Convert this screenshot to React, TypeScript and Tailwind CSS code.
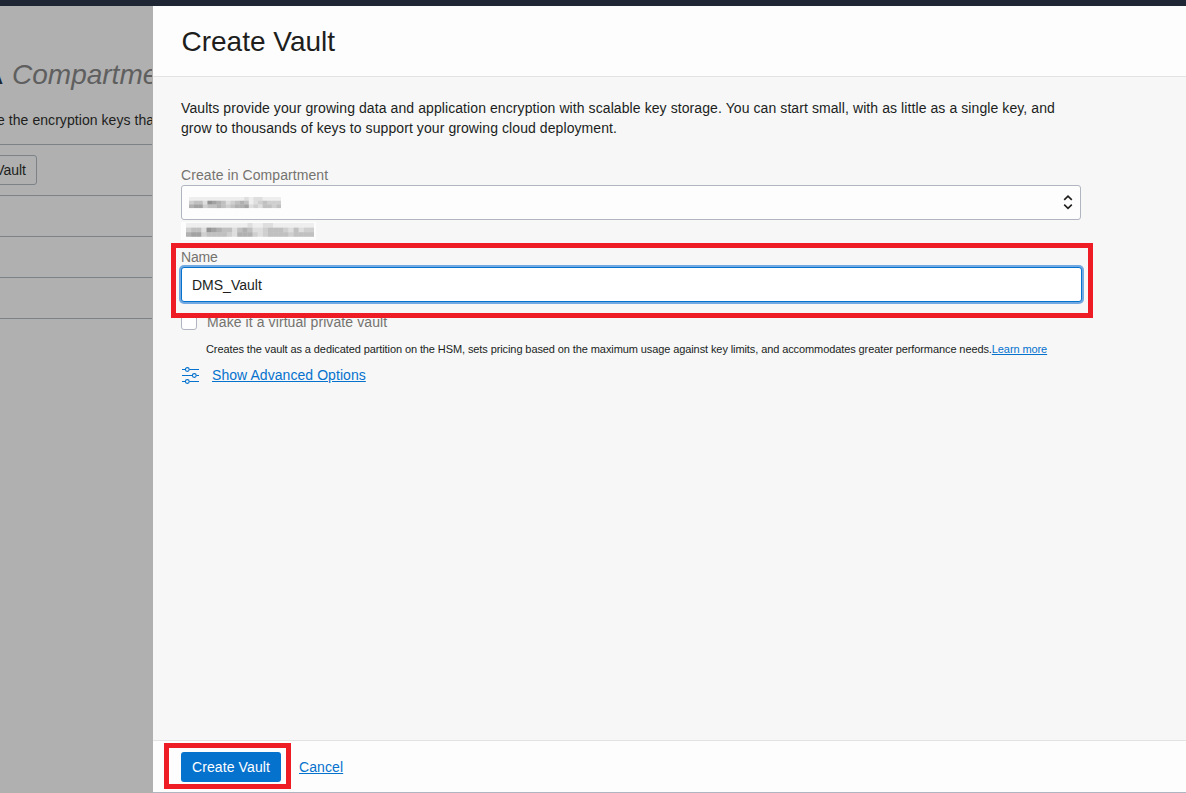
import React from "react";

const fieldRows = [
  "11111111111121221111",
  "34427654234541234333",
  "56634454345562324434",
];

const hintRows = [
  "1111111111112112211111111",
  "3442765442454223444324233",
  "5663444432555323444434444",
];

type MosaicProps = { rows: string[]; className: string; cell: number; rowHeight: number; left: number; top: number };

function Mosaic({ rows, className, cell, rowHeight, left, top }: MosaicProps) {
  return (
    <svg className={className} aria-hidden="true">
      {rows.flatMap((row, y) =>
        row.split("").map((v, x) => (
          <rect key={`${x}-${y}`} x={left + x * cell} y={top + y * rowHeight} width={cell} height={rowHeight} fill="#000" opacity={Number(v) * 0.06} />
        )),
      )}
    </svg>
  );
}

function Backdrop() {
  return (
    <aside className="flex w-[153px] shrink-0 flex-col overflow-hidden whitespace-nowrap bg-[#b0b0b0]">
      <div className="flex h-[138px] w-[152px] shrink-0 flex-col overflow-hidden">
        <h1 className="-ml-[17px] mt-[53px] text-[28px] leading-8">
          <span className="mr-[2px] font-bold text-[#1e2733]">A</span>{" "}
          <em className="-ml-px text-[#5f5f5f]">Compartment</em>
        </h1>
        <p className="-ml-[3px] mt-[19px] text-[14px] leading-5 tracking-[0.06px]">e the encryption keys that</p>
      </div>
      <div className="flex h-[51px] w-[152px] shrink-0 items-center border-t border-[#7c8286]">
        <button className="-ml-[60px] h-[30px] w-[97px] rounded-[3px] border border-[#7c8286] pr-[10px] text-right text-[14px]">Create Vault</button>
      </div>
      <div className="h-[41px] w-[152px] shrink-0 border-t border-[#7c8286]" />
      <div className="h-[41px] w-[152px] shrink-0 border-t border-[#7c8286]" />
      <div className="h-[42px] w-[152px] shrink-0 border-y border-[#7c8286]" />
    </aside>
  );
}

export default function App() {
  return (
    <div className="relative flex h-[793px] w-[1186px] flex-col overflow-hidden bg-[#f7f7f7] font-['Liberation_Sans',Arial,sans-serif] text-[14px] text-[#201e1c]">
      <div className="h-[6px] shrink-0 bg-[#1e2733]" />
      <div className="flex min-h-0 flex-1">
        <Backdrop />
        <main className="flex min-w-0 flex-1 flex-col">
          <header className="flex h-[71px] shrink-0 items-center border-b border-[#e3e3e3] bg-[#fdfdfd] pl-[28.5px] pt-0.5">
            <h2 className="text-[28px] leading-8">Create Vault</h2>
          </header>
          <section className="flex flex-1 flex-col items-start pl-7 pt-[21px]">
            <p className="w-[890px] text-[14px] leading-5 tracking-[0.085px]">
              Vaults provide your growing data and application encryption with scalable key storage. You can start small, with as little as a single key, and
              grow to thousands of keys to support your growing cloud deployment.
            </p>
            <label className="mt-[27px] leading-5 tracking-[0.08px] text-[#75736f]">Create in Compartment</label>
            <div className="flex h-[35px] w-[900px] items-center justify-between rounded-[3px] border border-[#b0b5c0] bg-[#fdfdfd] pl-1.5 pr-[7px]">
              <Mosaic rows={fieldRows} className="h-6 w-[98px]" cell={4.6} rowHeight={3.7} left={1} top={6} />
              <svg className="h-4 w-[10px]" viewBox="0 0 10 16" fill="none" stroke="#201e1c" strokeWidth="1.6">
                <path d="M1.2 4.9 5 1.2l3.8 3.7M1.2 9.7 5 13.3l3.8-3.6" />
              </svg>
            </div>
            <div className="mt-0.5 h-[18px] w-[135px] bg-[#fdfdfd]">
              <Mosaic rows={hintRows} className="block h-[18px] w-[135px]" cell={5.12} rowHeight={4.6} left={5} top={1} />
            </div>
            <label className="mt-[7px] leading-5 tracking-[-0.2px] text-[#75736f]">Name</label>
            <input
              className="h-[35px] w-[901px] rounded-[3px] border border-[#0572ce] bg-white px-[10px] shadow-[0_0_0_2px_#73a9e2] outline-none"
              defaultValue="DMS_Vault"
            />
            <div className="mt-[10px] flex h-5 items-center tracking-[0.09px] text-[#75736f]">
              <span className="mr-[10px] h-4 w-4 rounded-[3px] border border-[#b0b5c0] bg-white" />
              Make it a virtual private vault
            </div>
            <p className="ml-[25px] mt-[9px] whitespace-nowrap text-[11px] leading-4 tracking-[-0.096px]">
              Creates the vault as a dedicated partition on the HSM, sets pricing based on the maximum usage against key limits, and accommodates greater performance needs.
              <a className="text-[#0572ce] underline">Learn more</a>
            </p>
            <div className="mt-2 flex h-5 items-center tracking-[0.06px] text-[#0572ce]">
              <svg className="ml-px mr-3 h-[18px] w-[18px]" viewBox="0 0 18 18" fill="none" stroke="currentColor" strokeWidth="1.1">
                <path d="M0 3.5h3.2M7.4 3.5H17M0 9.5h10.2M14.4 9.5H17M0 15.5h3.2M7.4 15.5H17" />
                <circle cx="5.3" cy="3.5" r="1.9" />
                <circle cx="12.3" cy="9.5" r="1.9" />
                <circle cx="5.3" cy="15.5" r="1.9" />
              </svg>
              <a className="underline">Show Advanced Options</a>
            </div>
          </section>
          <footer className="flex h-[53px] shrink-0 items-center border-b border-t border-b-[#b0b5c0] border-t-[#e3e3e3] bg-[#fdfdfd] pl-7">
            <button className="h-[30px] w-[100px] rounded-[3px] bg-[#0572ce] pt-0.5 tracking-[0.1px] text-white">Create Vault</button>
            <a className="ml-[18px] pt-0.5 tracking-[0.1px] text-[#0572ce] underline">Cancel</a>
          </footer>
        </main>
      </div>
      <div className="pointer-events-none absolute left-[171px] top-[243px] h-[75px] w-[922px] border-[5px] border-[#ee1c24]" />
      <div className="pointer-events-none absolute left-[164px] top-[743px] h-[46px] w-[127px] border-[5px] border-[#ee1c24]" />
    </div>
  );
}
